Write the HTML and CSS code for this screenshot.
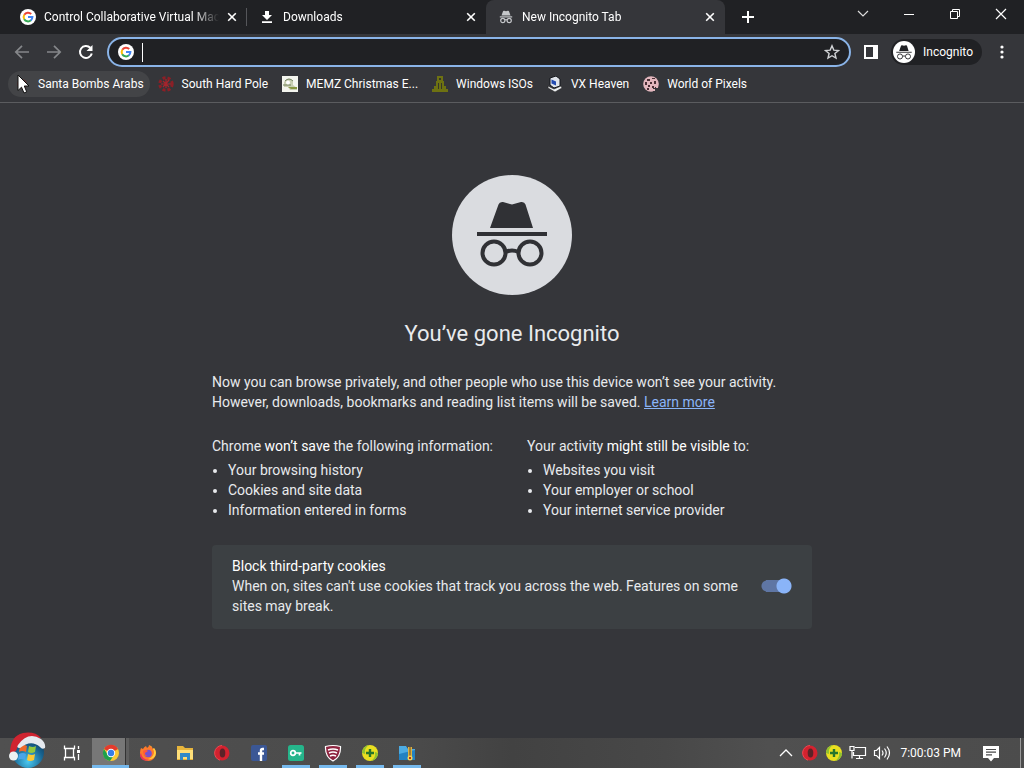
FILE: index.html
```html
<!DOCTYPE html>
<html lang="en">
<head>
<meta charset="utf-8">
<title>New Incognito Tab</title>
<link rel="stylesheet" href="styles.css">
</head>
<body>
<svg class="defs" width="0" height="0" aria-hidden="true">
  <symbol id="google" viewBox="0 0 16 16">
    <circle cx="8" cy="8" r="8" fill="#fff"/>
    <g fill="none" stroke-width="2">
      <path d="M4.3 5.7A4.4 4.4 0 0 1 11.2 5" stroke="#ea4335"/>
      <path d="M4.3 10.3a4.4 4.4 0 0 1 0-4.6" stroke="#fbbc05"/>
      <path d="M4.2 10.2a4.4 4.4 0 0 0 6.7 1.1" stroke="#34a853"/>
      <path d="M10.8 11.4A4.4 4.4 0 0 0 12.4 8.1H8" stroke="#4285f4"/>
    </g>
  </symbol>
  <symbol id="close" viewBox="0 0 10 10"><path d="M1.2 1.2l7.6 7.6M8.8 1.2L1.2 8.8" stroke="#fff" stroke-width="1.6"/></symbol>
  <symbol id="spy" viewBox="0 0 72 68">
    <path d="M14 27L22.500 3.500Q23.500 .5 27 1L36 3.500 45 1Q48.500 .5 49.500 3.500L57 27z" fill="currentColor"/>
    <path d="M1 33h70" stroke="currentColor" stroke-width="4"/>
    <g fill="none" stroke="currentColor" stroke-width="4"><circle cx="18" cy="52" r="11.500"/><circle cx="54" cy="52" r="11.500"/><path d="M29.500 51q6.500-3 13 0"/></g>
  </symbol>
  <symbol id="opera" viewBox="0 0 18 18">
    <circle cx="9" cy="9" r="7.500" fill="#d3222f"/><ellipse cx="9.500" cy="9" rx="2.800" ry="4.600" fill="#5b2328"/><path d="M9 1.500a7.500 7.500 0 0 0-2 14.700" fill="none" stroke="#ee4650" stroke-width="1"/>
  </symbol>
  <symbol id="guard" viewBox="0 0 18 18">
    <circle cx="9" cy="9" r="8" fill="#e9df20"/><path d="M1 9a8 8 0 0 1 7-8Q3 4 4 10zM17 9a8 8 0 0 1-7 8q5-3 4-9z" fill="#8fc331"/><path d="M9 5v8M5 9h8" stroke="#26752c" stroke-width="2.400"/>
  </symbol>
</svg>

<header class="browser">
  <div class="tabstrip">
    <div class="tab tab-divided">
      <svg class="icon16"><use href="#google"/></svg>
      <span class="tab-title">Control Collaborative Virtual Machines</span>
      <button class="tab-close" aria-label="Close tab"><svg width="10" height="10"><use href="#close"/></svg></button>
    </div>
    <div class="tab">
      <svg class="icon16" viewBox="0 0 16 16"><path d="M6 2h4v4h3L8 11 3 6h3zM3 12.300h10V14H3z" fill="#fff"/></svg>
      <span class="tab-title">Downloads</span>
      <button class="tab-close" aria-label="Close tab"><svg width="10" height="10"><use href="#close"/></svg></button>
    </div>
    <div class="tab tab-active">
      <svg class="icon16" viewBox="0 0 16 16"><g fill="#c5c7ca"><path d="M3.500 6.500L5 2.300q.3-.8 1.200-.5L8 2.300l1.800-.5q.9-.3 1.200.5l1.500 4.200z"/><path d="M1.800 7.300h12.400v1.200H1.800z"/></g><g fill="none" stroke="#c5c7ca" stroke-width="1.200"><circle cx="4.800" cy="11.500" r="2.100"/><circle cx="11.200" cy="11.500" r="2.100"/><path d="M6.900 11q1.100-.6 2.200 0"/></g></svg>
      <span class="tab-title">New Incognito Tab</span>
      <button class="tab-close" aria-label="Close tab"><svg width="10" height="10"><use href="#close"/></svg></button>
    </div>
    <button class="new-tab" aria-label="New tab"><svg width="14" height="14"><path d="M7 1v12M1 7h12" stroke="#fff" stroke-width="2"/></svg></button>
    <div class="window-buttons">
      <button aria-label="Search tabs"><svg width="12" height="8"><path d="M1 1l5 5 5-5" fill="none" stroke="#ddd" stroke-width="1.200"/></svg></button>
      <button aria-label="Minimize"><svg width="10" height="10"><path d="M0 5.500h10" stroke="#fff"/></svg></button>
      <button aria-label="Restore"><svg width="12" height="12"><path d="M1.500 3.500h7v7h-7zM3.500 3.500v-2h7v7h-2" fill="none" stroke="#fff"/></svg></button>
      <button aria-label="Close"><svg width="12" height="12"><path d="M1 1l10 10M11 1L1 11" stroke="#fff" stroke-width="1.200"/></svg></button>
    </div>
  </div>

  <div class="toolbar">
    <div class="nav">
      <button aria-label="Back"><svg width="16" height="16"><path d="M15 8H2M8 1.800L1.800 8 8 14.200" fill="none" stroke="#85878a" stroke-width="1.700"/></svg></button>
      <button aria-label="Forward"><svg width="16" height="16"><path d="M1 8h13M8 1.800L14.200 8 8 14.200" fill="none" stroke="#85878a" stroke-width="1.700"/></svg></button>
      <button aria-label="Reload"><svg width="16" height="16"><path d="M13.800 9.500A6 6 0 1 1 12.300 3.800" fill="none" stroke="#fff" stroke-width="2"/><path d="M14.500 1v6h-6z" fill="#fff"/></svg></button>
    </div>
    <div class="omnibox">
      <svg class="icon16"><use href="#google"/></svg>
      <span class="caret"></span>
      <input type="text" aria-label="Address and search bar">
      <button aria-label="Bookmark this tab"><svg width="16" height="16"><path d="M8 1.800l1.800 4.300 4.700.4-3.600 3 1.100 4.600L8 11.700l-4 2.400 1.100-4.600-3.600-3 4.700-.4z" fill="none" stroke="#d0d2d5" stroke-width="1.400"/></svg></button>
    </div>
    <button class="side-panel" aria-label="Side panel"><svg width="14" height="14"><path d="M1 1h12v12H1z" fill="none" stroke="#fff" stroke-width="2"/><path d="M9 0h5v14H9z" fill="#fff"/></svg></button>
    <button class="profile"><span class="avatar"><svg width="16" height="15"><use href="#spy"/></svg></span>Incognito</button>
    <button class="menu" aria-label="Menu"><svg width="4" height="14" fill="#fff"><circle cx="2" cy="2" r="1.600"/><circle cx="2" cy="7" r="1.600"/><circle cx="2" cy="12" r="1.600"/></svg></button>
  </div>

  <nav class="bookmarks" aria-label="Bookmarks">
    <a href="#" class="hovered"><svg class="icon16" viewBox="0 0 16 16"><circle cx="8" cy="8" r="5" fill="#5b3836"/><path d="M8 5l4 1v4H7z" fill="#a33c36"/></svg>Santa Bombs Arabs</a>
    <a href="#"><svg class="icon16" viewBox="0 0 16 16"><circle cx="8" cy="8" r="6.200" fill="none" stroke="#8c1f26" stroke-width="3" stroke-dasharray="3 2"/><path d="M5 5l6 6M11 4l-6 7M8 3v9M3 8h10" stroke="#a5242c" stroke-width="1.200"/></svg>South Hard Pole</a>
    <a href="#"><svg class="icon16" viewBox="0 0 16 16"><path d="M0 0h16v16H0z" fill="#f4f5ee"/><path d="M2 6q4-6 9-1v4l4 3v2H8l-2-3H2z" fill="#c9cfb2"/><path d="M3 5q4-4 8 0M1 9h8" fill="none" stroke="#71805d"/><circle cx="6" cy="6.500" r="2" fill="#fff"/><path d="M6 11h9v2H9z" fill="#879640"/></svg>MEMZ Christmas E...</a>
    <a href="#"><svg class="icon16" viewBox="0 0 16 16"><path d="M5 0h6v5h1v5h2v3h2v3H0v-3h2v-3h2V5h1z" fill="#6e7212"/><path d="M7 2h2v2H7zM6 7h1v6H6zM9 7h1v6H9z" fill="#35362a"/></svg>Windows ISOs</a>
    <a href="#"><svg class="icon16" viewBox="0 0 16 16"><path d="M3 2l6-2 4 3v7l-6 2-4-3z" fill="#dfe3ea" stroke="#15171c"/><path d="M4.500 3.500l4.500 2v4l-4.500-2z" fill="#234bb0"/><path d="M1 10l6 3 7-3 1 2-7 4-7-4z" fill="#eef0f2" stroke="#222" stroke-width=".6"/></svg>VX Heaven</a>
    <a href="#"><svg class="icon16" viewBox="0 0 16 16"><circle cx="8" cy="8" r="7.800" fill="#e2b6bd"/><g fill="#4a2f35"><path d="M4 3h3v2H4zM9 2h3v1H9zM2 6h2v3H2zM7 6h2v2H7zM11 5h2v3h-2zM5 9h2v2H5zM9 10h2v2H9zM4 12h2v2H4zM12 11h2v2h-2z"/></g><path d="M10 16v-4h6v4z" fill="#35363a"/><path d="M10 13h2v2h-2zM13 10h2v2h-2z" fill="#e2b6bd"/></svg>World of Pixels</a>
    <svg class="cursor" width="14" height="21" viewBox="0 0 14 21"><path d="M1 1v15.500l3.500-3.300L7 19l2.700-1.200L7.300 12H12z" fill="#fff" stroke="#111"/></svg>
  </nav>
</header>

<main class="page">
  <div class="hero"><svg width="72" height="68"><use href="#spy"/></svg></div>
  <h1>You’ve gone Incognito</h1>
  <div class="copy">
    <p>Now you can browse privately, and other people who use this device won’t see your activity. However, downloads, bookmarks and reading list items will be saved. <a href="#">Learn more</a></p>
    <div class="columns">
      <section>
        <p>Chrome <em>won’t save</em> the following information:</p>
        <ul><li>Your browsing history</li><li>Cookies and site data</li><li>Information entered in forms</li></ul>
      </section>
      <section>
        <p>Your activity <em>might still be visible</em> to:</p>
        <ul><li>Websites you visit</li><li>Your employer or school</li><li>Your internet service provider</li></ul>
      </section>
    </div>
    <div class="cookies">
      <label for="block"><em>Block third-party cookies</em><br>When on, sites can't use cookies that track you across the web. Features on some sites may break.</label>
      <input type="checkbox" id="block" class="toggle" checked>
    </div>
  </div>
</main>

<footer class="taskbar">
  <button class="start" aria-label="Start">
    <svg width="38" height="36" viewBox="0 0 38 36">
      <defs><radialGradient id="orb" cx=".5" cy=".8" r=".8"><stop offset="0" stop-color="#49c8f0"/><stop offset=".6" stop-color="#17628f"/><stop offset="1" stop-color="#123450"/></radialGradient></defs>
      <circle cx="20" cy="20" r="16" fill="url(#orb)"/>
      <path d="M12 14q4-2 7 0l-1 6q-4-2-7 0z" fill="#ec6a2c"/><path d="M21 14q4 2 7 0l-1 6q-4 2-7 0z" fill="#93c83e"/><path d="M11 22q4-2 7 0l-1 6q-4-2-7 0z" fill="#4aa5e8"/><path d="M20 22q4 2 7 0l-1 6q-4 2-7 0z" fill="#fcc934"/>
      <path d="M2 22Q2 4 15 1q12-2 18 5l-8 0Q12 6 8 19z" fill="#cf2430"/>
      <path d="M10 13Q20-1 33 7q5 4 4 9-3 2-5-1-9-8-20 1-4 0-2-3z" fill="#e6eaef"/>
      <circle cx="5.500" cy="24" r="4.500" fill="#eef1f3"/>
    </svg>
  </button>
  <button class="task task-view" aria-label="Task view"><svg width="18" height="18" fill="none" stroke="#fff" stroke-width="1.300"><path d="M1.500 1.500v3h10v-3M1.500 16.500v-3h10v3M2.500 4.500h8v9h-8zM15.500 2v3M15.500 10v6"/><path d="M14 6h3v3h-3z" fill="#fff" stroke="none"/></svg></button>
  <button class="task task-active" aria-label="Chrome"><svg width="18" height="18" viewBox="0 0 18 18"><circle cx="9" cy="9" r="8" fill="#fcc934"/><path d="M9 9L2 5a8 8 0 0 1 14 0z" fill="#e33b2e"/><path d="M2 5a8 8 0 0 0 6 12l4-6H6z" fill="#1fa04b"/><circle cx="9" cy="9" r="4.200" fill="#fff"/><circle cx="9" cy="9" r="3.200" fill="#377ee8"/></svg></button>
  <button class="task" aria-label="Firefox"><svg width="18" height="18" viewBox="0 0 18 18"><path d="M2 4l2 1q1-2 3-3l1 2q2-1 2-3 3 1 4 4l1-1q2 3 2 5a8 8 0 1 1-16 0q0-3 1-5z" fill="#ff7a2b"/><path d="M10 1q5 3 5 8-1 5-6 6 7 1 8-6 0-3-2-5l-1 1q-1-3-4-4z" fill="#ffcf3d"/><path d="M2 9q1 7 8 7-7 2-9-4z" fill="#e9315c"/><circle cx="9" cy="9.500" r="3.800" fill="#7650cf"/><path d="M4 7q3-2 5 0l-3 2q0 3 3 3-5 1-5-5z" fill="#ff5a38"/></svg></button>
  <button class="task" aria-label="File Explorer"><svg width="18" height="18" viewBox="0 0 18 18"><path d="M1 2h6l2 2h8v12H1z" fill="#e7b53c"/><path d="M1 6h16v9H1z" fill="#ffdf79"/><path d="M4 9h10v7h-3v-3H7v3H4z" fill="#318ac9"/></svg></button>
  <button class="task" aria-label="Opera"><svg width="18" height="18"><use href="#opera"/></svg></button>
  <button class="task" aria-label="Facebook"><svg width="18" height="18" viewBox="0 0 18 18"><rect x="1" y="1" width="16" height="16" rx="2" fill="#3b5795"/><path d="M14 5h-1.500q-1.500 0-1.500 1.500V17M8 9.500h6" fill="none" stroke="#fff" stroke-width="2.400"/></svg></button>
  <button class="task task-open" aria-label="VPN"><svg width="18" height="18" viewBox="0 0 18 18"><rect x="1" y="1" width="16" height="16" rx="2.500" fill="#25b58b"/><circle cx="6" cy="9" r="2.300" fill="none" stroke="#fff" stroke-width="1.700"/><path d="M8 9h6.500M12.500 9v2.500" stroke="#fff" stroke-width="1.700"/></svg></button>
  <button class="task task-open" aria-label="Shield"><svg width="18" height="18" viewBox="0 0 18 18"><path d="M1.500 2.500q7.500-2 15 0Q17 13 9 17 1 13 1.500 2.500z" fill="#8e2540" stroke="#fff" stroke-width="1.200"/><path d="M4 6q5-2 10 0M5 9q4-2 8 0M6 12q3-1.500 6 0" fill="none" stroke="#fff" stroke-width="1.500"/></svg></button>
  <button class="task task-open" aria-label="Antivirus"><svg width="18" height="18"><use href="#guard"/></svg></button>
  <button class="task task-open" aria-label="File manager"><svg width="18" height="18" viewBox="0 0 18 18"><path d="M1 2h7l2 3h7v11H1z" fill="#4cabe2"/><path d="M1 10l16-4v10H1z" fill="#2382c2"/><path d="M10 3h4v12h-4z" fill="#dbb143"/><path d="M12 3v9" stroke="#66502a"/><circle cx="12" cy="14" r="2.500" fill="#f4d552"/><path d="M11 13h2v2h-2z" fill="#b42d1f"/></svg></button>
  <div class="tray">
    <button aria-label="Show hidden icons"><svg width="14" height="8"><path d="M1 7l6-6 6 6" fill="none" stroke="#fff" stroke-width="1.300"/></svg></button>
    <button aria-label="Opera"><svg width="18" height="18"><use href="#opera"/></svg></button>
    <button aria-label="Antivirus"><svg width="18" height="18"><use href="#guard"/></svg></button>
    <button aria-label="Network"><svg width="18" height="16" fill="none" stroke="#fff" stroke-width="1.200"><path d="M6 2.500h10.500v8H4.500V7M10.500 10.500v3M7 13.500h7M1 1.500h4v4H1zM3 5.500v8"/></svg></button>
    <button aria-label="Volume"><svg width="18" height="16" fill="none" stroke="#fff" stroke-width="1.200"><path d="M1.500 5.500h2l3-3v11l-3-3h-2zM9 5.500q2 2.500 0 5M11.500 3.500q3.500 4.500 0 9M14 1.500q5 6.500 0 13"/></svg></button>
    <time>7:00:03 PM</time>
    <button class="notes" aria-label="Notifications"><svg width="18" height="17"><path d="M1 1h16v12h-5l-3 3.500L6 13H1z" fill="#fff"/><path d="M4 4.500h10M4 7.200h10M4 9.900h6" stroke="#4b4b4b" stroke-width="1.200"/></svg></button>
  </div>
</footer>
</body>
</html>
```
FILE: styles.css
```css
* { box-sizing: border-box; }

body {
  margin: 0;
  min-height: 100vh;
  display: flex;
  flex-direction: column;
  background: #35363a;
  color: #fff;
  font: 12px/16px Roboto, "Noto Sans", sans-serif;
}

button {
  display: flex;
  align-items: center;
  justify-content: center;
  flex: none;
  padding: 0;
  border: 0;
  background: none;
  color: inherit;
  font: inherit;
}

svg { display: block; flex: none; }
.defs { position: absolute; }
.icon16 { width: 16px; height: 16px; }

/* Tab strip */
.tabstrip {
  display: flex;
  height: 34px;
  padding-left: 8px;
  background: #202124;
}

.tab {
  display: flex;
  align-items: center;
  gap: 8px;
  flex: 0 1 239px;
  min-width: 0;
  padding: 0 10px 0 12px;
}

.tab-divided {
  background: linear-gradient(#55565a, #55565a) right center / 1px 18px no-repeat;
}

.tab-active {
  background: #35363a;
  border-radius: 8px 8px 0 0;
}

.tab-title {
  flex: 1;
  overflow: hidden;
  white-space: nowrap;
  mask-image: linear-gradient(to right, #000 85%, transparent);
}

.tab-close { width: 10px; height: 16px; }
.new-tab { width: 46px; }

.window-buttons {
  display: flex;
  margin-left: auto;
  height: 28px;
}
.window-buttons button { width: 46px; }

/* Toolbar */
.toolbar {
  display: flex;
  align-items: center;
  height: 35px;
  padding: 1px 12px 0 6px;
}

.nav { display: flex; }
.nav button { width: 32px; height: 28px; }

.omnibox {
  display: flex;
  align-items: center;
  flex: 1;
  height: 30px;
  margin-left: 5px;
  padding: 0 9px;
  border: 2px solid #8ab4e8;
  border-radius: 15px;
  background: #202124;
}
.omnibox input {
  flex: 1;
  min-width: 0;
  border: 0;
  outline: 0;
  background: none;
  color: #fff;
  font: inherit;
}
.caret { width: 1px; height: 19px; margin-left: 8px; background: #fff; }

.side-panel { width: 40px; height: 28px; }

.profile {
  gap: 8px;
  height: 26px;
  padding: 0 9px 0 2px;
  border-radius: 13px;
  background: #202124;
}
.avatar {
  display: grid;
  place-items: center;
  width: 22px;
  height: 22px;
  border-radius: 50%;
  background: #fff;
  color: #202124;
}
.menu { width: 20px; height: 28px; margin-left: 10px; }

/* Bookmarks */
.bookmarks {
  position: relative;
  display: flex;
  gap: 2px;
  height: 34px;
  padding: 2px 8px 5px;
  border-bottom: 1px solid #5b5c5f;
}
.bookmarks a {
  display: flex;
  align-items: center;
  gap: 8px;
  padding: 0 6px;
  border-radius: 13px;
  color: #fff;
  text-decoration: none;
  white-space: nowrap;
}
.bookmarks .hovered { background: #434447; }
.cursor { position: absolute; left: 17px; top: 5px; }

/* Incognito page */
.page {
  flex: 1;
  display: flex;
  flex-direction: column;
  align-items: center;
  padding: 72px 24px 40px;
  color: #e8eaed;
  font: 14px/20px Roboto, sans-serif;
}
.hero {
  display: grid;
  place-items: center;
  width: 120px;
  height: 120px;
  border-radius: 50%;
  background: #dadce0;
  color: #303135;
}
h1 {
  margin: 25px 0 24px;
  font-size: 22px;
  line-height: 28px;
  font-weight: 400;
}
.copy { width: 100%; max-width: 600px; }
.copy p { margin: 0; }
.copy a { color: #8ab4f8; }
.copy em { font-style: normal; color: #fff; }
.columns {
  display: grid;
  grid-template-columns: 1fr 1fr;
  gap: 30px;
  margin: 24px 0 25px;
}
.columns ul { margin: 4px 0 0; padding-left: 16px; }
.cookies {
  display: flex;
  align-items: center;
  gap: 20px;
  padding: 11px 20px 13px;
  border-radius: 4px;
  background: #3c4043;
}
.cookies label { flex: 1; }
.toggle {
  appearance: none;
  flex: none;
  width: 32px;
  height: 16px;
  margin: 0;
  background:
    radial-gradient(circle at 24px 8px, #8ab4f8 7px, transparent 8px),
    linear-gradient(#5f76a4, #5f76a4) 6px 2px / 20px 12px no-repeat,
    radial-gradient(circle at 7px 8px, #5f76a4 5px, transparent 6px);
}

/* Taskbar */
.taskbar {
  display: flex;
  align-items: stretch;
  height: 30px;
  padding-left: 8px;
  background: linear-gradient(to right, #505050, #4b4b4b 40%, #424242 50%, #484848 65%, #505050 75%, #4c4c4c);
}
.start { width: 38px; height: 36px; margin: -6px 6px 0 0; }
.task { width: 37px; border-bottom: 3px solid transparent; padding-top: 3px; }
.task-view { width: 40px; }
.task-active {
  border-color: #76b9ed;
  background: linear-gradient(to right, #777 33px, #333 33px 34px, #5e5e5e 34px);
}
.task-open {
  background: linear-gradient(#76b9ed, #76b9ed) center bottom / 28px 3px no-repeat border-box;
}
.tray {
  display: flex;
  align-items: center;
  margin-left: auto;
  padding-right: 3px;
}
.tray button { width: 24px; height: 30px; }
.tray time { margin-left: 6px; white-space: nowrap; }
.tray .notes { width: 60px; border-right: 1px solid #999; }
```
